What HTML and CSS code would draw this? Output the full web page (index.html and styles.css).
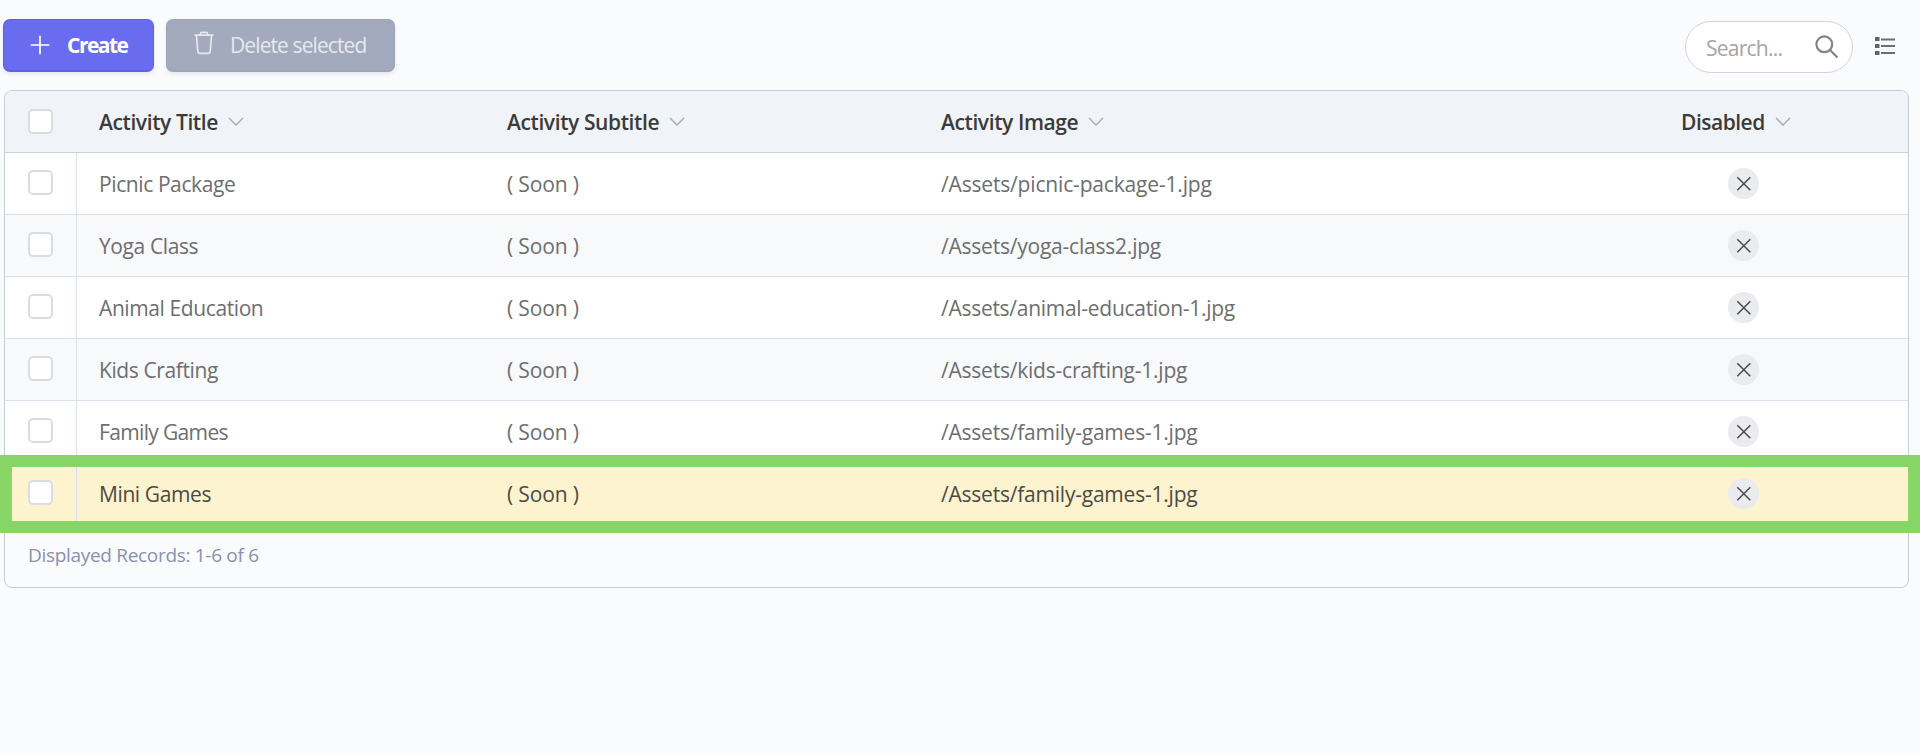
FILE: index.html
```html
<!DOCTYPE html>
<html lang="en">
<head>
<meta charset="utf-8">
<title>Activities</title>
<link rel="stylesheet" href="styles.css">
</head>
<body>
<svg class="defs" width="0" height="0">
  <symbol id="chevron" viewBox="0 0 16 10"><path d="M1 1l7 7 7-7"/></symbol>
  <symbol id="cross" viewBox="0 0 16 16"><path d="M1.3 1.3l13 13M14.3 1.3l-13 13"/></symbol>
</svg>
<header class="toolbar">
  <button class="btn create"><svg width="20" height="20" viewBox="0 0 20 20"><path d="M10 .7v18.6M.7 10h18.6"/></svg><span>Create</span></button>
  <button class="btn delete"><svg width="20" height="24" viewBox="0 0 20 24"><path d="M.5 4.2h19M6 4q.5-2.700 2-2.700h4q1.500 0 2 2.700M2.500 4.500l1.300 15.900q.2 2 2 2h8.400q1.800 0 2-2L17.500 4.500"/></svg><span>Delete selected</span></button>
  <div class="search"><span>Search...</span><svg width="24" height="24" viewBox="0 0 24 24"><circle cx="9.300" cy="9.300" r="7.900"/><path d="M15 15l7.500 7.500"/></svg></div>
  <svg class="list" width="20" height="20" viewBox="0 0 20 20"><path class="dots" d="M0 1h4.500v4H0zM0 8h4.500v4H0zM0 15h4.500v4H0z"/><path d="M6 3.500h14M6 10h14M6 17h14"/></svg>
</header>
<main class="grid">
  <div class="row head"><div class="check"><i></i></div><div class="cell title"><span>Activity Title</span><svg><use href="#chevron"/></svg></div><div class="cell subtitle"><span>Activity Subtitle</span><svg><use href="#chevron"/></svg></div><div class="cell image"><span>Activity Image</span><svg><use href="#chevron"/></svg></div><div class="cell disabled"><span>Disabled</span><svg><use href="#chevron"/></svg></div></div>
  <div class="row"><div class="check"><i></i></div><div class="cell title">Picnic Package</div><div class="cell subtitle">( Soon )</div><div class="cell image wide">/Assets/picnic-package-1.jpg</div><div class="cell flag"><b><svg><use href="#cross"/></svg></b></div></div>
  <div class="row alt"><div class="check"><i></i></div><div class="cell title">Yoga Class</div><div class="cell subtitle">( Soon )</div><div class="cell image">/Assets/yoga-class2.jpg</div><div class="cell flag"><b><svg><use href="#cross"/></svg></b></div></div>
  <div class="row"><div class="check"><i></i></div><div class="cell title">Animal Education</div><div class="cell subtitle">( Soon )</div><div class="cell image tight">/Assets/animal-education-1.jpg</div><div class="cell flag"><b><svg><use href="#cross"/></svg></b></div></div>
  <div class="row alt"><div class="check"><i></i></div><div class="cell title">Kids Crafting</div><div class="cell subtitle">( Soon )</div><div class="cell image">/Assets/kids-crafting-1.jpg</div><div class="cell flag"><b><svg><use href="#cross"/></svg></b></div></div>
  <div class="row"><div class="check"><i></i></div><div class="cell title tight">Family Games</div><div class="cell subtitle">( Soon )</div><div class="cell image">/Assets/family-games-1.jpg</div><div class="cell flag"><b><svg><use href="#cross"/></svg></b></div></div>
  <div class="row selected"><div class="check"><i></i></div><div class="cell title">Mini Games</div><div class="cell subtitle">( Soon )</div><div class="cell image">/Assets/family-games-1.jpg</div><div class="cell flag"><b><svg><use href="#cross"/></svg></b></div></div>
  <footer class="footer">Displayed Records: 1-6 of 6</footer>
  <div class="marker"></div>
</main>
</body>
</html>
```
FILE: styles.css
```css
* { box-sizing: border-box; }
body { margin: 0; height: 755px; overflow: hidden; background: #fafbfd; font-family: "Open Sans", "Noto Sans", sans-serif; font-size: 21px; letter-spacing: -0.75px; color: #6c6e71; }
svg { fill: none; stroke: currentColor; flex: none; }
.defs { position: absolute; }
.toolbar { display: flex; align-items: flex-start; height: 90px; padding: 19px 25px 0 3px; }
.btn { display: flex; align-items: center; height: 53px; border: 1px solid #6260e6; border-bottom-width: 2px; border-radius: 7px; padding: 0 0 1px 27px; font: inherit; color: #fff; box-shadow: 0 2px 4px rgba(60, 70, 100, .12); white-space: nowrap; }
.btn svg { stroke-width: 1.7; }
.btn span { margin: 1px 0 0 16px; }
.create { width: 151px; padding-left: 26px; letter-spacing: -1.5px; background: #6a6cf0; font-weight: 700; }
.create span { margin-left: 17px; }
.delete { width: 229px; margin-left: 12px; letter-spacing: -0.9px; background: #a4aabd; border-color: #9da4b9; color: #e6e8ed; }
.delete svg { margin-top: -3px; }
.search { display: flex; justify-content: space-between; align-items: center; width: 168px; height: 52px; margin: 2px 0 0 auto; padding: 0 13px 0 20px; border: 1px solid #ced4e0; border-radius: 26px; background: #fff; color: #a4a4a4; }
.search svg { color: #7d8687; stroke-width: 2.2; }
.search span { padding-top: 2px; }
.list { margin: 17px 0 0 22px; color: #667174; stroke-width: 1.8; }
.list .dots { fill: #5b666b; stroke: none; }
.grid { position: relative; width: 1905px; height: 498px; margin-left: 4px; border: 1px solid #c6ced9; border-radius: 8px; }
.row { display: grid; grid-template-columns: 72px 407px 434px 740px 1fr; height: 62px; border-bottom: 1px solid #dbe1ea; background: #fff; }
.head { background: #f0f3f8; border-color: #c8d0da; border-radius: 7px 7px 0 0; color: #3b3b3b; font-weight: 600; }
.alt { background: #f7f9fb; }
.selected { background: #fdf3cf; color: #4b4a46; }
.check { padding: 17px 0 0 23px; border-right: 1px solid #dbe1ea; }
.head .check { padding-top: 18px; border-color: transparent; }
.check i { display: block; width: 25px; height: 25px; border: 2px solid #d8dde4; border-radius: 5px; background: #fff; }
.cell { display: flex; align-items: center; padding: 0 0 0 23px; white-space: nowrap; }
.title { padding-left: 22px; letter-spacing: -0.4px; }
.title.tight { letter-spacing: -0.65px; }
.subtitle { letter-spacing: -0.15px; }
.image { letter-spacing: -0.22px; }
.image.wide { letter-spacing: -0.17px; }
.image.tight { letter-spacing: -0.28px; }
.head .cell { letter-spacing: -0.4px; }
.head .disabled { letter-spacing: -0.5px; }
.head svg { width: 16px; height: 10px; margin-left: 10px; color: #a5a9ae; stroke-width: 1.3; }
.cell.flag { align-items: flex-start; padding: 15px 0 0 70px; }
.flag b { display: flex; align-items: center; justify-content: center; width: 31px; height: 31px; padding-top: 1px; border-radius: 50%; background: #eaebef; color: #494a4e; }
.flag svg { width: 16px; height: 16px; stroke-width: 1.5; }
.footer { padding: 17px 0 0 23px; font-size: 19px; letter-spacing: -0.31px; color: #8a90ac; }
.marker { position: absolute; left: -5px; top: 364px; width: 1920px; height: 78px; border: 12px solid #86d566; }
```
